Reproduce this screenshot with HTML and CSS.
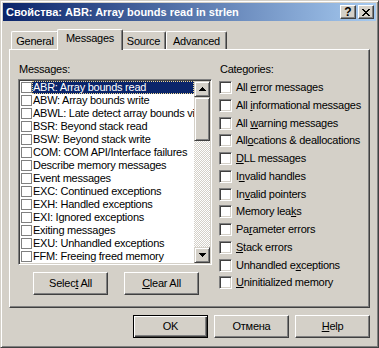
FILE: index.html
```html
<!DOCTYPE html>
<html lang="ru">
<head>
    <meta charset="UTF-8">
    <title>Свойства: ABR: Array bounds read in strlen</title>
    <link rel="stylesheet" href="styles.css">
</head>
<body>
    <div class="window">
        <div class="titlebar">
            <span class="title">Свойства: ABR: Array bounds read in strlen</span>
            <div class="caption-btns">
                <button class="cap-btn">?</button>
                <button class="cap-btn">
                    <svg width="8" height="7" viewBox="0 0 8 7" shape-rendering="crispEdges">
                        <path d="M0 0h2v1h-2z M6 0h2v1h-2z M1 1h2v1h-2z M5 1h2v1h-2z M2 2h4v1h-4z M3 3h2v1h-2z M2 4h4v1h-4z M1 5h2v1h-2z M5 5h2v1h-2z M0 6h2v1h-2z M6 6h2v1h-2z" fill="#000"/>
                    </svg>
                </button>
            </div>
        </div>

        <div class="body">
            <div class="tabs">
                <div class="tab tab-general">General</div>
                <div class="tab tab-messages active">Messages</div>
                <div class="tab tab-source">Source</div>
                <div class="tab tab-advanced">Advanced</div>
            </div>

            <div class="panel">
                <div class="col-left">
                    <div class="label">Messages:</div>
                    <div class="listbox">
                        <ul class="list">
                            <li class="selected"><span class="box"></span><span class="item-text">ABR: Array bounds read</span></li>
                            <li><span class="box"></span><span class="item-text">ABW: Array bounds write</span></li>
                            <li><span class="box"></span><span class="item-text">ABWL: Late detect array bounds violation</span></li>
                            <li><span class="box"></span><span class="item-text">BSR: Beyond stack read</span></li>
                            <li><span class="box"></span><span class="item-text">BSW: Beyond stack write</span></li>
                            <li><span class="box"></span><span class="item-text">COM: COM API/Interface failures</span></li>
                            <li><span class="box"></span><span class="item-text">Describe memory messages</span></li>
                            <li><span class="box"></span><span class="item-text">Event messages</span></li>
                            <li><span class="box"></span><span class="item-text">EXC: Continued exceptions</span></li>
                            <li><span class="box"></span><span class="item-text">EXH: Handled exceptions</span></li>
                            <li><span class="box"></span><span class="item-text">EXI: Ignored exceptions</span></li>
                            <li><span class="box"></span><span class="item-text">Exiting messages</span></li>
                            <li><span class="box"></span><span class="item-text">EXU: Unhandled exceptions</span></li>
                            <li><span class="box"></span><span class="item-text">FFM: Freeing freed memory</span></li>
                        </ul>
                        <div class="scrollbar">
                            <div class="sb-btn">
                                <svg width="7" height="4" viewBox="0 0 7 4" shape-rendering="crispEdges"><path d="M3 0h1v1h-1z M2 1h3v1h-3z M1 2h5v1h-5z M0 3h7v1h-7z" fill="#000"/></svg>
                            </div>
                            <div class="sb-thumb"></div>
                            <div class="sb-track"></div>
                            <div class="sb-btn">
                                <svg width="7" height="4" viewBox="0 0 7 4" shape-rendering="crispEdges"><path d="M0 0h7v1h-7z M1 1h5v1h-5z M2 2h3v1h-3z M3 3h1v1h-1z" fill="#000"/></svg>
                            </div>
                        </div>
                    </div>
                    <div class="btn-row">
                        <button class="btn">Selec<u>t</u> All</button>
                        <button class="btn"><u>C</u>lear All</button>
                    </div>
                </div>

                <div class="col-right">
                    <div class="label">Categories:</div>
                    <div class="checks">
                        <div class="check"><span class="check-box"></span><span>All <u>e</u>rror messages</span></div>
                        <div class="check"><span class="check-box"></span><span>All <u>i</u>nformational messages</span></div>
                        <div class="check"><span class="check-box"></span><span>All <u>w</u>arning messages</span></div>
                        <div class="check"><span class="check-box"></span><span>All<u>o</u>cations &amp; deallocations</span></div>
                        <div class="check"><span class="check-box"></span><span><u>D</u>LL messages</span></div>
                        <div class="check"><span class="check-box"></span><span>I<u>n</u>valid handles</span></div>
                        <div class="check"><span class="check-box"></span><span>In<u>v</u>alid pointers</span></div>
                        <div class="check"><span class="check-box"></span><span>Memory lea<u>k</u>s</span></div>
                        <div class="check"><span class="check-box"></span><span>Pa<u>r</u>ameter errors</span></div>
                        <div class="check"><span class="check-box"></span><span><u>S</u>tack errors</span></div>
                        <div class="check"><span class="check-box"></span><span>Unhandled e<u>x</u>ceptions</span></div>
                        <div class="check"><span class="check-box"></span><span><u>U</u>ninitialized memory</span></div>
                    </div>
                </div>
            </div>

            <div class="footer">
                <button class="btn default">OK</button>
                <button class="btn">Отмена</button>
                <button class="btn"><u>H</u>elp</button>
            </div>
        </div>
    </div>
</body>
</html>
```

FILE: styles.css
```css
* {
    box-sizing: border-box;
}
body {
    margin: 0;
    background: #d4d0c8;
    font-family: "Liberation Sans", Arial, sans-serif;
    font-size: 11px;
    line-height: 13px;
    letter-spacing: -0.25px;
    color: #000;
}
u {
    text-underline-offset: 1px;
}

/* window frame */
.window {
    width: 379px;
    height: 348px;
    background: #d4d0c8;
    border: 1px solid;
    border-color: #d4d0c8 #404040 #404040 #d4d0c8;
    box-shadow: inset 1px 1px #fff, inset -1px -1px #808080;
    padding: 2px;
}
.titlebar {
    height: 18px;
    display: flex;
    align-items: center;
    justify-content: space-between;
    background: linear-gradient(to right, #0a246a, #a6caf0);
    padding: 0 2px;
}
.title {
    color: #fff;
    font-weight: bold;
    letter-spacing: 0;
    padding-left: 1px;
}
.caption-btns {
    display: flex;
    gap: 2px;
}
.cap-btn {
    width: 16px;
    height: 14px;
    padding: 0;
    display: flex;
    align-items: center;
    justify-content: center;
    font: bold 12px "Liberation Sans", Arial, sans-serif;
    background: #d4d0c8;
    border: 1px solid;
    border-color: #fff #404040 #404040 #fff;
    box-shadow: inset -1px -1px #808080;
}

.body {
    padding: 8px 6px 0 6px;
}

/* tabs */
.tabs {
    display: flex;
    align-items: flex-end;
    height: 20px;
    padding-left: 2px;
}
.tab {
    height: 18px;
    padding-top: 3px;
    text-align: center;
    border: 1px solid;
    border-color: #fff #404040 transparent #fff;
    border-bottom: none;
    box-shadow: inset -1px 0 #808080;
    border-radius: 2px 2px 0 0;
    background: #d4d0c8;
}
.tab-general { width: 48px; }
.tab-messages { width: 62px; }
.tab-source { width: 45px; }
.tab-advanced { width: 61px; }
.tab.active {
    width: 66px;
    height: 21px;
    padding-top: 2px;
    margin: 0 -2px -1px;
    position: relative;
    z-index: 1;
}

/* panel */
.panel {
    height: 259px;
    display: grid;
    grid-template-columns: 194px 1fr;
    column-gap: 7px;
    padding: 13px 8px 0 8px;
    border: 1px solid;
    border-color: #fff #404040 #404040 #fff;
    box-shadow: inset -1px -1px #808080;
}
.label {
    height: 13px;
    padding-left: 1px;
}

.listbox {
    margin-top: 3px;
    height: 186px;
    display: flex;
    background: #fff;
    border: 1px solid;
    border-color: #808080 #fff #fff #808080;
    box-shadow: inset 1px 1px #404040, inset -1px -1px #d4d0c8;
    padding: 1px;
}
.list {
    flex: 1;
    min-width: 0;
    margin: 0;
    padding: 0;
    list-style: none;
    overflow: hidden;
}
.list li {
    display: flex;
    height: 13px;
    white-space: nowrap;
}
.box {
    flex: none;
    width: 11px;
    height: 11px;
    margin: 1px 0 1px 1px;
    border: 1px solid #808080;
    background: #fff;
}
.item-text {
    flex: 1;
    padding-left: 1px;
    overflow: hidden;
}
.selected .item-text {
    background: #0a246a;
    color: #fff;
    outline: 1px dotted #f0d890;
    outline-offset: -1px;
}

.scrollbar {
    flex: none;
    width: 16px;
    display: flex;
    flex-direction: column;
}
.sb-btn, .sb-thumb {
    flex: none;
    background: #d4d0c8;
    border: 1px solid;
    border-color: #d4d0c8 #404040 #404040 #d4d0c8;
    box-shadow: inset 1px 1px #fff, inset -1px -1px #808080;
}
.sb-btn {
    height: 16px;
    display: flex;
    align-items: center;
    justify-content: center;
}
.sb-thumb {
    height: 44px;
}
.sb-track {
    flex: 1;
    background: conic-gradient(#fff 25%, #d4d0c8 0 50%, #fff 0 75%, #d4d0c8 0);
    background-size: 2px 2px;
}

/* buttons */
.btn {
    width: 75px;
    height: 23px;
    padding: 0;
    font: inherit;
    letter-spacing: inherit;
    color: #000;
    background: #d4d0c8;
    border: 1px solid;
    border-color: #fff #404040 #404040 #fff;
    box-shadow: inset -1px -1px #808080;
}
.btn.default {
    border-color: #000;
    box-shadow: inset 1px 1px #fff, inset -1px -1px #404040, inset -2px -2px #808080;
}
.btn-row {
    display: flex;
    gap: 16px;
    margin-top: 7px;
    padding-left: 15px;
}

/* categories */
.checks {
    margin-top: 5px;
}
.check {
    display: flex;
    align-items: flex-start;
    height: 17.75px;
    white-space: nowrap;
}
.check-box {
    flex: none;
    width: 13px;
    height: 13px;
    margin-right: 4px;
    background: #fff;
    border: 1px solid;
    border-color: #808080 #fff #fff #808080;
    box-shadow: inset 1px 1px #404040, inset -1px -1px #d4d0c8;
}

.footer {
    display: flex;
    justify-content: flex-end;
    gap: 6px;
    margin-top: 7px;
}
```
